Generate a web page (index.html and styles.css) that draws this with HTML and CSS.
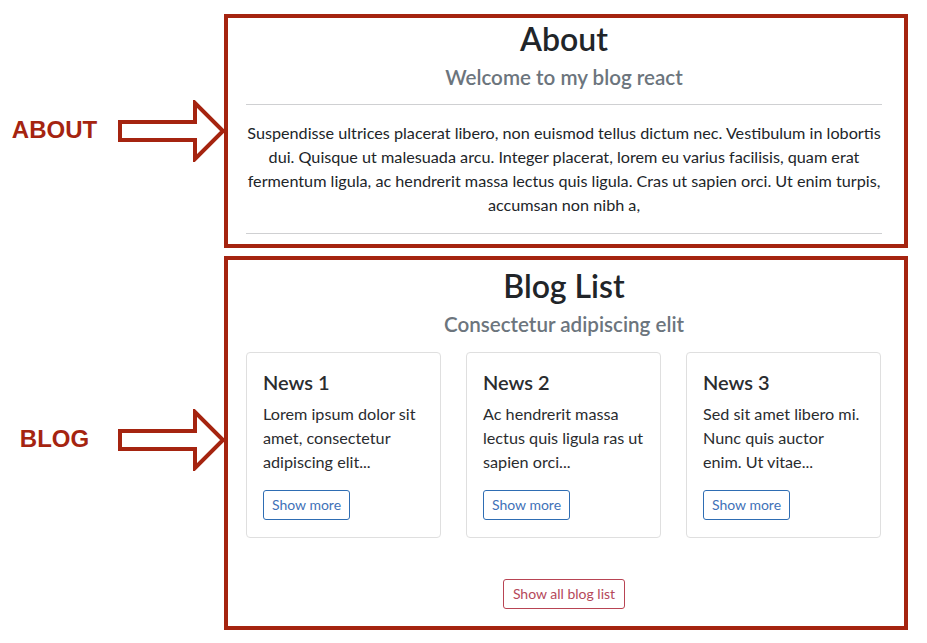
FILE: index.html
```html
<!DOCTYPE html>
<html lang="en">
<head>
<meta charset="utf-8">
<title>Blog</title>
<link rel="stylesheet" href="styles.css">
</head>
<body>
<div class="page">
  <div class="note">
    <span class="note-label">ABOUT</span>
    <svg class="note-arrow" width="108" height="62" viewBox="0 0 108 62" aria-hidden="true">
      <polygon points="2,22 77,22 77,3 105,31 77,59 77,40 2,40" fill="#fff" stroke="#a52410" stroke-width="4"/>
    </svg>
  </div>
  <section class="box about">
    <h2 class="title">About</h2>
    <h5 class="subtitle">Welcome to my blog react</h5>
    <hr class="rule">
    <p class="about-text">Suspendisse ultrices placerat libero, non euismod tellus dictum nec. Vestibulum in lobortis dui. Quisque ut malesuada arcu. Integer placerat, lorem eu varius facilisis, quam erat fermentum ligula, ac hendrerit massa lectus quis ligula. Cras ut sapien orci. Ut enim turpis, accumsan non nibh a,</p>
    <hr class="rule rule-bottom">
  </section>

  <div class="note note-blog">
    <span class="note-label">BLOG</span>
    <svg class="note-arrow" width="108" height="62" viewBox="0 0 108 62" aria-hidden="true">
      <polygon points="2,22 77,22 77,3 105,31 77,59 77,40 2,40" fill="#fff" stroke="#a52410" stroke-width="4"/>
    </svg>
  </div>
  <section class="box blog">
    <h2 class="title blog-title">Blog List</h2>
    <h5 class="subtitle">Consectetur adipiscing elit</h5>
    <div class="cards">
      <article class="card">
        <h5 class="card-title">News 1</h5>
        <p class="card-text">Lorem ipsum dolor sit amet, consectetur adipiscing elit...</p>
        <button class="btn btn-primary">Show more</button>
      </article>
      <article class="card">
        <h5 class="card-title">News 2</h5>
        <p class="card-text">Ac hendrerit massa lectus quis ligula ras ut sapien orci...</p>
        <button class="btn btn-primary">Show more</button>
      </article>
      <article class="card">
        <h5 class="card-title">News 3</h5>
        <p class="card-text">Sed sit amet libero mi. Nunc quis auctor enim. Ut vitae...</p>
        <button class="btn btn-primary">Show more</button>
      </article>
    </div>
    <div class="all">
      <button class="btn btn-danger">Show all blog list</button>
    </div>
  </section>
</div>
</body>
</html>
```

FILE: styles.css
```css
* { box-sizing: border-box; }
html, body { margin: 0; padding: 0; background: #fff; }
body {
  font-family: Lato, "Open Sans", sans-serif;
  color: #212529;
  font-size: 16.2px;
  line-height: 24px;
}
.page {
  display: grid;
  grid-template-columns: 224px 684px;
  row-gap: 8px;
  padding-top: 14px;
}
.note {
  display: flex;
  align-items: center;
}
.note-blog {
  padding-bottom: 6px;
}
.note-label {
  width: 109px;
  text-align: center;
  font-family: "Liberation Sans", Arial, sans-serif;
  font-weight: bold;
  font-size: 24px;
  line-height: 28px;
  color: #a52410;
  margin-top: -2px;
}
.note-arrow {
  display: block;
  margin-left: 9px;
  margin-right: -3px;
}
.box {
  border: 4px solid #a52410;
  padding: 0 22px 0 18px;
  text-align: center;
}
.title {
  margin: 2px 0 0;
  font-size: 32px;
  line-height: 38px;
  font-weight: 600;
  color: #212529;
}
.blog-title { margin-top: 7px; }
.subtitle {
  margin: 7px 0 0;
  font-size: 20.6px;
  line-height: 24px;
  font-weight: 600;
  color: #6c757d;
}
.rule {
  margin: 15px 0 0;
  border: 0;
  border-top: 1px solid #cfd0d2;
  height: 0;
}
.rule-bottom { margin: 16px 0 10px; }
.about-text {
  margin: 16px 0 0;
}
.cards {
  display: grid;
  grid-template-columns: repeat(3, 195px);
  column-gap: 25px;
  margin-top: 16px;
  text-align: left;
}
.card {
  border: 1px solid #dfdfdf;
  border-radius: 4px;
  padding: 17px 16px 17px;
  display: flex;
  flex-direction: column;
  align-items: flex-start;
}
.card-title {
  margin: 0;
  font-size: 20px;
  line-height: 24px;
  font-weight: 600;
  color: #2a2c2f;
}
.card-text {
  margin: 8px 0 16px;
  color: #2a2c2f;
}
.btn {
  font-family: inherit;
  font-size: 14px;
  line-height: 20px;
  padding: 4px 8px;
  height: 30px;
  background: #fff;
  border-radius: 3px;
  cursor: pointer;
}
.btn-primary {
  border: 1px solid #2e6db3;
  color: #3f72b8;
}
.btn-danger {
  padding: 4px 9px;
  border: 1px solid #b84453;
  color: #b5485a;
}
.all {
  margin: 41px 0 17px;
}
```
